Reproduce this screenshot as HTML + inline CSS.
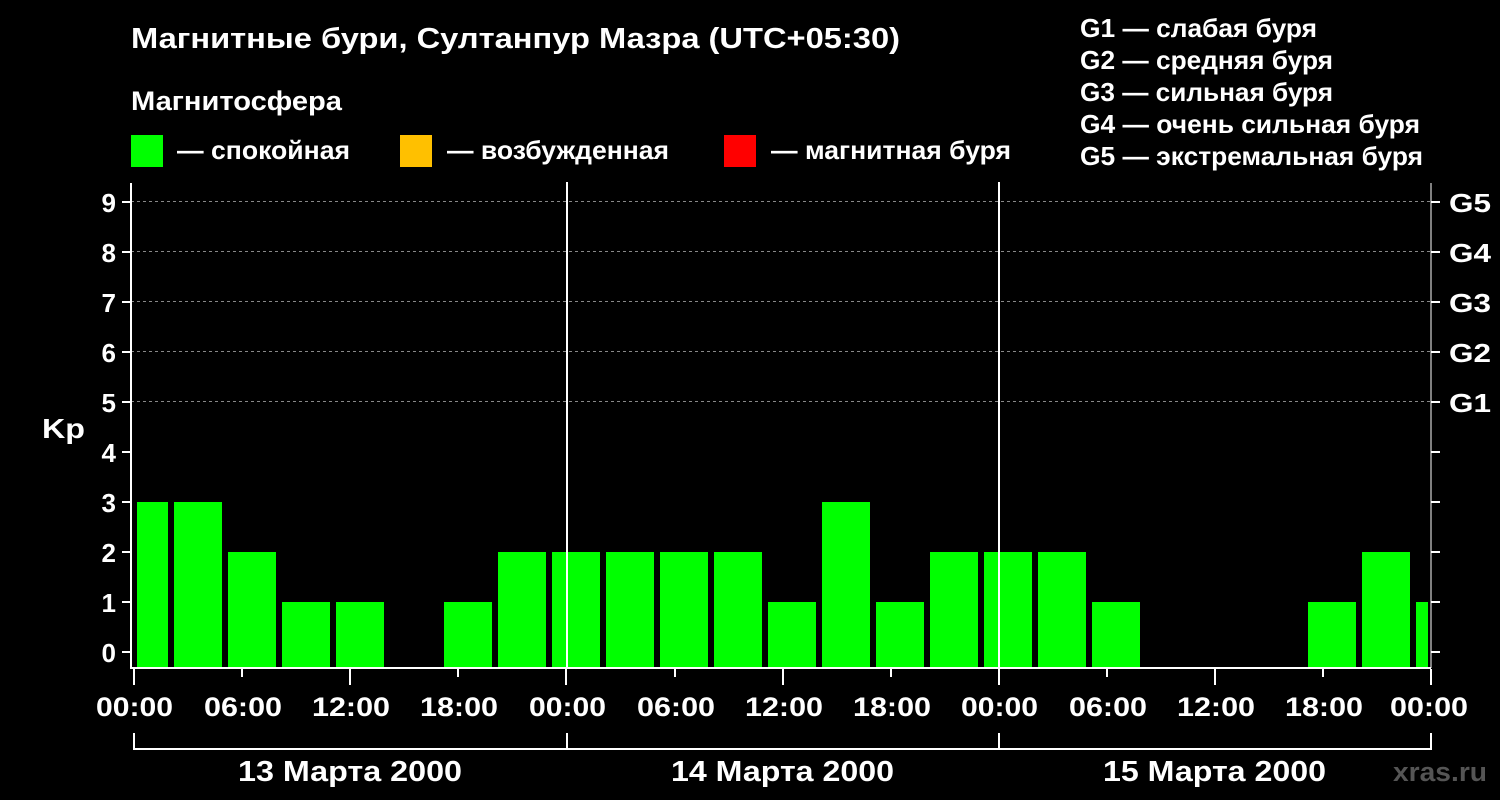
<!DOCTYPE html>
<html><head><meta charset="utf-8"><style>
html,body{margin:0;padding:0;background:#000;}
svg{display:block;}
text{font-family:"Liberation Sans",sans-serif;font-weight:bold;fill:#fff;}
</style></head><body>
<svg width="1500" height="800" xmlns="http://www.w3.org/2000/svg">
<rect width="1500" height="800" fill="#000"/>
<text x="131" y="48" font-size="29" textLength="769" lengthAdjust="spacingAndGlyphs">Магнитные бури, Султанпур Мазра (UTC+05:30)</text>
<text x="131" y="110" font-size="27" textLength="211" lengthAdjust="spacingAndGlyphs">Магнитосфера</text>
<rect x="131" y="135" width="32" height="32" fill="#00ff00"/>
<text x="177" y="159" font-size="26" textLength="173" lengthAdjust="spacingAndGlyphs">— спокойная</text>
<rect x="400" y="135" width="32" height="32" fill="#ffc000"/>
<text x="447" y="159" font-size="26" textLength="222" lengthAdjust="spacingAndGlyphs">— возбужденная</text>
<rect x="724" y="135" width="32" height="32" fill="#ff0000"/>
<text x="771" y="159" font-size="26" textLength="240" lengthAdjust="spacingAndGlyphs">— магнитная буря</text>
<g font-size="26">
<text x="1080" y="37" textLength="237" lengthAdjust="spacingAndGlyphs">G1 — слабая буря</text>
<text x="1080" y="69" textLength="253" lengthAdjust="spacingAndGlyphs">G2 — средняя буря</text>
<text x="1080" y="101" textLength="253" lengthAdjust="spacingAndGlyphs">G3 — сильная буря</text>
<text x="1080" y="133" textLength="340" lengthAdjust="spacingAndGlyphs">G4 — очень сильная буря</text>
<text x="1080" y="165" textLength="343" lengthAdjust="spacingAndGlyphs">G5 — экстремальная буря</text>
</g>
<g stroke="#888" stroke-dasharray="3,3" stroke-width="1">
<line x1="131" x2="1431" y1="201.5" y2="201.5"/>
<line x1="131" x2="1431" y1="251.5" y2="251.5"/>
<line x1="131" x2="1431" y1="301.5" y2="301.5"/>
<line x1="131" x2="1431" y1="351.5" y2="351.5"/>
<line x1="131" x2="1431" y1="401.5" y2="401.5"/>
</g>
<g fill="#00ff00">
<rect x="137" y="502" width="31" height="165"/>
<rect x="174" y="502" width="48" height="165"/>
<rect x="228" y="552" width="48" height="115"/>
<rect x="282" y="602" width="48" height="65"/>
<rect x="336" y="602" width="48" height="65"/>
<rect x="444" y="602" width="48" height="65"/>
<rect x="498" y="552" width="48" height="115"/>
<rect x="552" y="552" width="48" height="115"/>
<rect x="606" y="552" width="48" height="115"/>
<rect x="660" y="552" width="48" height="115"/>
<rect x="714" y="552" width="48" height="115"/>
<rect x="768" y="602" width="48" height="65"/>
<rect x="822" y="502" width="48" height="165"/>
<rect x="876" y="602" width="48" height="65"/>
<rect x="930" y="552" width="48" height="115"/>
<rect x="984" y="552" width="48" height="115"/>
<rect x="1038" y="552" width="48" height="115"/>
<rect x="1092" y="602" width="48" height="65"/>
<rect x="1308" y="602" width="48" height="65"/>
<rect x="1362" y="552" width="48" height="115"/>
<rect x="1416" y="602" width="12" height="65"/>
</g>
<g stroke="#fff" stroke-width="2" fill="none">
<line x1="567" y1="182" x2="567" y2="668"/>
<line x1="999" y1="182" x2="999" y2="668"/>
<polyline points="131,183 131,668 1431,668"/>
<line x1="1431" y1="183" x2="1431" y2="668" stroke-width="1"/>
<path d="M122 652H131M122 602H131M122 552H131M122 502H131M122 452H131M122 402H131M122 352H131M122 302H131M122 252H131M122 202H131"/>
<path d="M1431 652H1440M1431 602H1440M1431 552H1440M1431 502H1440M1431 452H1440M1431 402H1440M1431 352H1440M1431 302H1440M1431 252H1440M1431 202H1440"/>
<path d="M134 669V685M242 669V677M350 669V685M458 669V677M566 669V685M675 669V677M783 669V685M891 669V677M999 669V685M1107 669V677M1215 669V685M1323 669V677M1431 669V685"/>
<path d="M134 733V749H1431V733M567 733V749M999 733V749"/>
</g>
<g font-size="26" text-anchor="end">
<text x="116" y="662">0</text><text x="116" y="612">1</text><text x="116" y="562">2</text>
<text x="116" y="512">3</text><text x="116" y="462">4</text><text x="116" y="412">5</text>
<text x="116" y="362">6</text><text x="116" y="312">7</text><text x="116" y="262">8</text>
<text x="116" y="212">9</text>
</g>
<text x="42" y="438" font-size="28" textLength="43" lengthAdjust="spacingAndGlyphs">Kp</text>
<g font-size="26">
<text x="1449" y="412" textLength="42" lengthAdjust="spacingAndGlyphs">G1</text>
<text x="1449" y="362" textLength="42" lengthAdjust="spacingAndGlyphs">G2</text>
<text x="1449" y="312" textLength="42" lengthAdjust="spacingAndGlyphs">G3</text>
<text x="1449" y="262" textLength="42" lengthAdjust="spacingAndGlyphs">G4</text>
<text x="1449" y="212" textLength="42" lengthAdjust="spacingAndGlyphs">G5</text>
</g>
<g font-size="27">
<text x="96" y="716" textLength="77" lengthAdjust="spacingAndGlyphs">00:00</text>
<text x="204" y="716" textLength="78" lengthAdjust="spacingAndGlyphs">06:00</text>
<text x="312" y="716" textLength="78" lengthAdjust="spacingAndGlyphs">12:00</text>
<text x="420" y="716" textLength="78" lengthAdjust="spacingAndGlyphs">18:00</text>
<text x="529" y="716" textLength="77" lengthAdjust="spacingAndGlyphs">00:00</text>
<text x="637" y="716" textLength="78" lengthAdjust="spacingAndGlyphs">06:00</text>
<text x="745" y="716" textLength="78" lengthAdjust="spacingAndGlyphs">12:00</text>
<text x="853" y="716" textLength="78" lengthAdjust="spacingAndGlyphs">18:00</text>
<text x="961" y="716" textLength="77" lengthAdjust="spacingAndGlyphs">00:00</text>
<text x="1069" y="716" textLength="78" lengthAdjust="spacingAndGlyphs">06:00</text>
<text x="1177" y="716" textLength="78" lengthAdjust="spacingAndGlyphs">12:00</text>
<text x="1285" y="716" textLength="78" lengthAdjust="spacingAndGlyphs">18:00</text>
<text x="1390" y="716" textLength="78" lengthAdjust="spacingAndGlyphs">00:00</text>
</g>
<g font-size="29">
<text x="238" y="781" textLength="224" lengthAdjust="spacingAndGlyphs">13 Марта 2000</text>
<text x="671" y="781" textLength="223" lengthAdjust="spacingAndGlyphs">14 Марта 2000</text>
<text x="1103" y="781" textLength="223" lengthAdjust="spacingAndGlyphs">15 Марта 2000</text>
</g>
<text x="1393" y="781" font-size="27" textLength="94" lengthAdjust="spacingAndGlyphs" style="fill:#555">xras.ru</text>
</svg>
</body></html>
